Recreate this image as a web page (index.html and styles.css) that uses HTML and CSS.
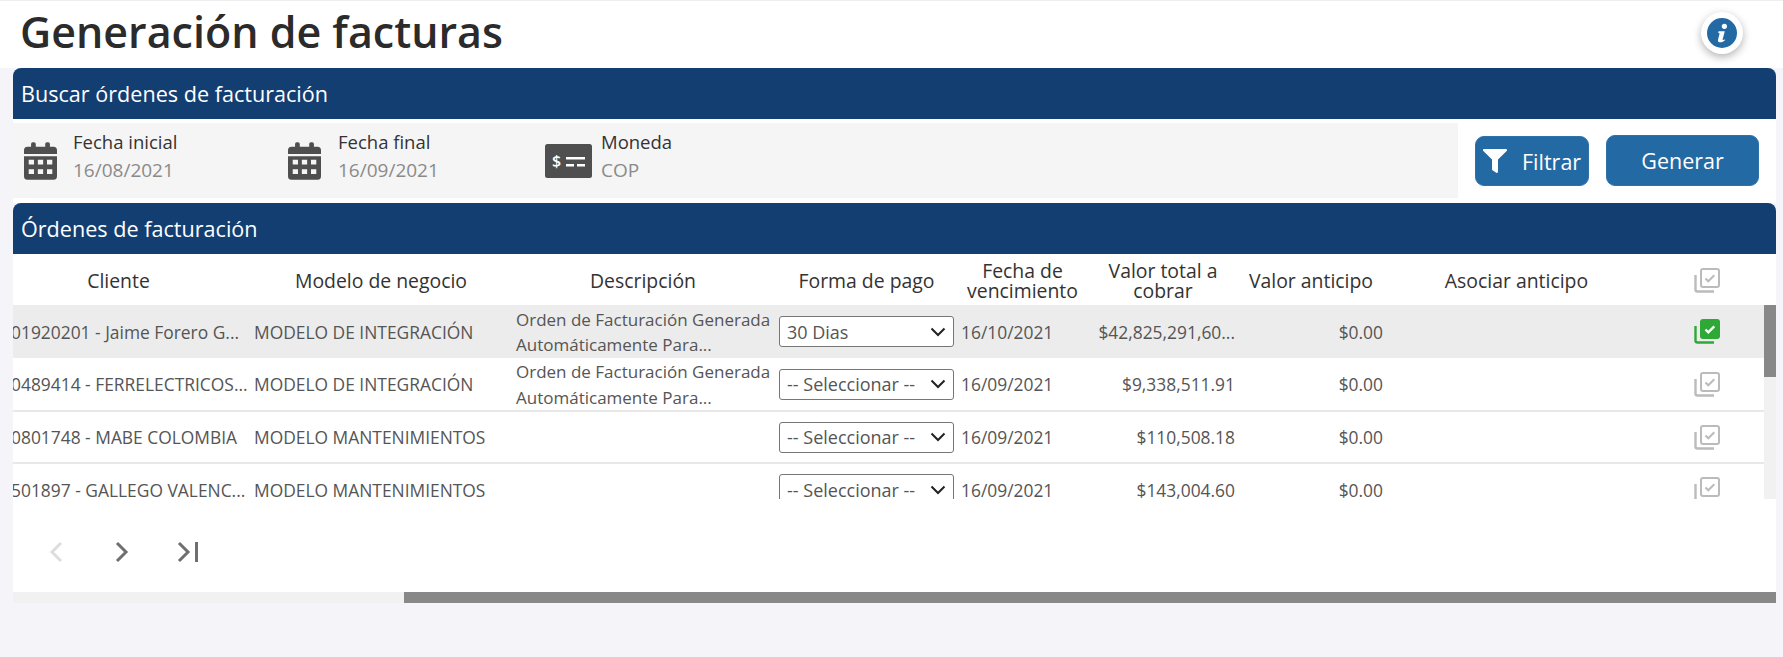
FILE: index.html
```html
<!DOCTYPE html>
<html lang="es">
<head>
  <meta charset="UTF-8" />
  <title>Generación de facturas</title>
  <link rel="stylesheet" href="styles.css">
</head>
<body>
  <svg class="sprites" width="0" height="0">
    <symbol id="i-calendar" viewBox="0 0 448 512">
      <path fill-rule="evenodd" d="M0 192h448v272a48 48 0 0 1-48 48H48a48 48 0 0 1-48-48zM64 240v64h72v-64zM188 240v64h72v-64zM312 240v64h72v-64zM64 368v64h72v-64zM188 368v64h72v-64zM312 368v64h72v-64z"/>
      <path d="M48 64h48V24a24 24 0 0 1 24-24h16a24 24 0 0 1 24 24v40h128V24a24 24 0 0 1 24-24h16a24 24 0 0 1 24 24v40h48a48 48 0 0 1 48 48v48H0v-48a48 48 0 0 1 48-48z"/>
    </symbol>
    <symbol id="i-pick" viewBox="0 0 26 25">
      <rect x="7" y="1" width="18" height="18" rx="2" fill="none" stroke="currentColor" stroke-width="2"/>
      <path d="M1.5 7v14.5a2 2 0 0 0 2 2H20" fill="none" stroke="currentColor" stroke-width="2.4"/>
      <path d="M11.5 10.5l2.8 2.8 6-6" fill="none" stroke="currentColor" stroke-width="2"/>
    </symbol>
    <symbol id="i-picked" viewBox="0 0 26 25">
      <rect x="6" y="0" width="20" height="20" rx="3" fill="currentColor"/>
      <path d="M1.5 7v14.5a2 2 0 0 0 2 2H20" fill="none" stroke="currentColor" stroke-width="2.4"/>
      <path d="M11.5 10.5l2.8 2.8 6-6" fill="none" stroke="#fff" stroke-width="2.4"/>
    </symbol>
  </svg>

  <header class="page-head">
    <h1>Generación de facturas</h1>
    <button class="info-btn" aria-label="Información">
      <svg viewBox="0 0 30 30" width="30" height="30">
        <circle cx="15" cy="15" r="15" fill="#2369a3"/>
        <circle cx="17.4" cy="8.3" r="2.6" fill="#fff"/>
        <path d="M11.6 13.2h6.2l-2.2 8.2c-.1.5.3.7.8.5l1.2-.6.3.9c-1.5 1.4-3 2.1-4.6 2.1-1.900 0-2.700-1-2.300-2.600l1.500-5.700c.1-.6-.2-.9-.8-.9h-.5z" fill="#fff"/>
      </svg>
    </button>
  </header>

  <main class="content">
    <div class="bar">Buscar órdenes de facturación</div>
    <section class="search">
      <div class="filters">
        <div class="filter filter-date">
          <svg class="cal-icon"><use href="#i-calendar"/></svg>
          <div class="filter-text"><div class="filter-label">Fecha inicial</div><div class="filter-value">16/08/2021</div></div>
        </div>
        <div class="filter filter-date2">
          <svg class="cal-icon"><use href="#i-calendar"/></svg>
          <div class="filter-text"><div class="filter-label">Fecha final</div><div class="filter-value">16/09/2021</div></div>
        </div>
        <div class="filter">
          <svg class="money-icon" viewBox="0 0 47 34">
            <rect width="47" height="34" rx="2.500" fill="#4f4f4f"/>
            <path d="M21 13h19v2.600H21zM21 20h8v2.600h-8zM32 20h8v2.600h-8z" fill="#fff"/>
            <text x="11.500" y="23" class="money-sign">$</text>
          </svg>
          <div class="filter-text"><div class="filter-label">Moneda</div><div class="filter-value">COP</div></div>
        </div>
      </div>
      <div class="actions">
        <button class="btn btn-filter">
          <svg viewBox="0 0 512 512" width="24" height="24"><path fill="#fff" d="M487.976 0H24.028C2.71 0-8.047 25.866 7.058 40.971L192 225.941V432c0 7.831 3.821 15.17 10.237 19.662l80 55.98C298.02 518.69 320 507.493 320 487.98V225.941l184.947-184.97C520.021 25.896 509.338 0 487.976 0z"/></svg>
          Filtrar
        </button>
        <button class="btn btn-generate">Generar</button>
      </div>
    </section>

    <div class="bar bar-orders">Órdenes de facturación</div>
    <section class="orders">
      <div class="cols head">
        <div class="h-client">Cliente</div>
        <div class="h-model">Modelo de negocio</div>
        <div class="h-desc">Descripción</div>
        <div>Forma de pago</div>
        <div class="h-date">Fecha de vencimiento</div>
        <div class="h-total">Valor total a cobrar</div>
        <div class="h-advance">Valor anticipo</div>
        <div>Asociar anticipo</div>
        <div class="pick"><svg class="pick-icon"><use href="#i-pick"/></svg></div>
      </div>

      <div class="table-body">
        <div class="rows">
          <div class="cols row selected">
            <div class="client">01920201 - Jaime Forero G...</div>
            <div>MODELO DE INTEGRACIÓN</div>
            <div class="desc">Orden de Facturación Generada<br>Automáticamente Para...</div>
            <div><select><option>30 Dias</option></select></div>
            <div class="date">16/10/2021</div>
            <div class="num">$42,825,291,60...</div>
            <div class="num">$0.00</div>
            <div></div>
            <div class="pick"><svg class="pick-icon on"><use href="#i-picked"/></svg></div>
          </div>
          <div class="cols row">
            <div class="client">0489414 - FERRELECTRICOS...</div>
            <div>MODELO DE INTEGRACIÓN</div>
            <div class="desc">Orden de Facturación Generada<br>Automáticamente Para...</div>
            <div><select><option>-- Seleccionar --</option></select></div>
            <div class="date">16/09/2021</div>
            <div class="num">$9,338,511.91</div>
            <div class="num">$0.00</div>
            <div></div>
            <div class="pick"><svg class="pick-icon"><use href="#i-pick"/></svg></div>
          </div>
          <div class="cols row">
            <div class="client">0801748 - MABE COLOMBIA</div>
            <div>MODELO MANTENIMIENTOS</div>
            <div class="desc"></div>
            <div><select><option>-- Seleccionar --</option></select></div>
            <div class="date">16/09/2021</div>
            <div class="num">$110,508.18</div>
            <div class="num">$0.00</div>
            <div></div>
            <div class="pick"><svg class="pick-icon"><use href="#i-pick"/></svg></div>
          </div>
          <div class="cols row">
            <div class="client">501897 - GALLEGO VALENC...</div>
            <div>MODELO MANTENIMIENTOS</div>
            <div class="desc"></div>
            <div><select><option>-- Seleccionar --</option></select></div>
            <div class="date">16/09/2021</div>
            <div class="num">$143,004.60</div>
            <div class="num">$0.00</div>
            <div></div>
            <div class="pick"><svg class="pick-icon"><use href="#i-pick"/></svg></div>
          </div>
        </div>
        <div class="vbar"><div class="vbar-thumb"></div></div>
      </div>

      <nav class="pager">
        <button class="page-btn off"><svg viewBox="0 0 14 22" width="14" height="22"><path d="M12 2 3 11l9 9"/></svg></button>
        <button class="page-btn"><svg viewBox="0 0 14 22" width="14" height="22"><path d="M2 2l9 9-9 9"/></svg></button>
        <button class="page-btn"><svg viewBox="0 0 22 22" width="22" height="22"><path d="M2 2l9 9-9 9M19.500 1v20"/></svg></button>
      </nav>
    </section>
    <div class="hbar"><div class="hbar-thumb"></div></div>
  </main>
</body>
</html>
```

FILE: styles.css
```css
* {
  box-sizing: border-box;
}

html, body {
  height: 100%;
}

body {
  margin: 0;
  background: #f4f4f9;
  color: #555;
  font-family: "Open Sans", "Noto Sans", sans-serif;
  font-size: 17.4px;
  overflow: hidden;
}

.sprites {
  display: block;
  height: 0;
}

.page-head {
  display: flex;
  align-items: center;
  justify-content: space-between;
  height: 68px;
  padding: 0 40px 5px 20px;
  background: #fff;
  border-top: 1px solid #eee;
}

h1 {
  margin: 0;
  color: #2b2b2b;
  font-size: 43px;
  font-weight: 600;
  line-height: 52px;
}

.info-btn {
  display: flex;
  align-items: center;
  justify-content: center;
  width: 42px;
  height: 42px;
  padding: 0;
  margin-top: 2px;
  border: none;
  border-radius: 50%;
  background: #fff;
  box-shadow: 0 3px 8px rgba(0,0,0,0.3);
}

.content {
  margin: 0 7px 0 13px;
}

.bar {
  height: 51px;
  padding-left: 8px;
  border-radius: 8px 8px 0 0;
  background: #133e72;
  color: #fff;
  font-size: 21.6px;
  line-height: 52px;
}

.search {
  display: flex;
  height: 84px;
  padding-top: 4px;
  background: #fff;
}

.filters {
  display: flex;
  width: 1445px;
  height: 75px;
  padding-left: 11px;
  background: #f5f5f5;
}

.filter {
  display: flex;
  align-items: center;
  gap: 17px;
}

.filter-date {
  width: 264px;
  gap: 16px;
}

.filter-date2 {
  width: 257px;
}

.filter-text {
  margin-bottom: 8px;
}

.money-icon {
  width: 47px;
  height: 34px;
  margin-right: -8px;
}

.money-sign {
  fill: #fff;
  font-size: 16px;
  font-weight: 600;
  text-anchor: middle;
}

.cal-icon {
  width: 33px;
  height: 38px;
  fill: #4f4f4f;
}

.filter-label {
  color: #333;
  font-size: 18.5px;
  line-height: 28px;
}

.filter-value {
  color: #8a8a8a;
  font-size: 19px;
  line-height: 29px;
}

.actions {
  display: flex;
  align-items: flex-start;
  gap: 17px;
  padding: 12px 0 0 17px;
}

.btn {
  height: 50px;
  border: 1px solid #2f72a9;
  border-radius: 9px;
  background: #2369a3;
  color: #fff;
  font-family: inherit;
  font-size: 21.5px;
}

.btn-filter {
  display: flex;
  align-items: center;
  gap: 15px;
  width: 114px;
  margin-top: 1px;
  padding: 0 0 0 7px;
}

.btn-generate {
  width: 153px;
  height: 51px;
}

.orders {
  background: #fff;
}

.cols {
  display: grid;
  grid-template-columns: 241px 262px 263px 175px 137px 144px 148px 267px 114px;
  align-items: center;
}

.head {
  height: 51px;
  padding-top: 2px;
  color: #333;
  font-size: 19.4px;
  font-weight: 500;
  line-height: 20px;
  text-align: center;
}

.h-client {
  padding-right: 30px;
}

.h-model {
  padding-right: 8px;
}

.h-desc {
  padding-right: 9px;
}

.h-date {
  padding: 0 7px;
}

.h-total {
  padding: 0 12px;
}

.h-advance {
  padding-left: 4px;
}

.table-body {
  display: flex;
  height: 194px;
}

.rows {
  flex: 1;
  overflow: hidden;
}

.row {
  height: 53px;
  border-bottom: 2px solid #e8e8e8;
  white-space: nowrap;
}

.row.selected {
  border-bottom: none;
  background: #ececec;
}

.row:nth-child(2) {
  height: 54px;
}

.row:nth-child(3) {
  height: 52px;
}

.client {
  margin-left: -2px;
  overflow: hidden;
}

.desc {
  padding-top: 1px;
  font-size: 17px;
  line-height: 25.5px;
}

.date {
  padding-left: 7px;
}

.num {
  text-align: right;
}

.pick {
  display: flex;
  justify-content: center;
}

.pick-icon {
  width: 26px;
  height: 25px;
  color: #bbb;
}

.pick-icon.on {
  color: #2ea836;
}

select {
  appearance: none;
  width: 175px;
  height: 31px;
  padding-left: 7px;
  border: 1px solid #767676;
  border-radius: 3px;
  background: #fff url("data:image/svg+xml,%3Csvg xmlns='http://www.w3.org/2000/svg' width='16' height='10'%3E%3Cpath d='M1.500 1.500 8 8l6.500-6.500' fill='none' stroke='%23222' stroke-width='2'/%3E%3C/svg%3E") no-repeat right 7px center;
  color: #555;
  font-family: inherit;
  font-size: 18px;
}

.vbar {
  width: 12px;
  background: #f1f1f1;
}

.vbar-thumb {
  height: 72px;
  background: #888;
}

.pager {
  display: flex;
  align-items: center;
  height: 93px;
  padding: 12px 0 0 10px;
}

.page-btn {
  display: flex;
  align-items: center;
  justify-content: center;
  width: 66px;
  height: 40px;
  padding: 0;
  border: none;
  background: none;
}

.page-btn svg {
  fill: none;
  stroke: #6f6f6f;
  stroke-width: 3;
}

.page-btn.off svg {
  stroke: #ddd;
}

.hbar {
  display: flex;
  justify-content: flex-end;
  height: 11px;
  background: #f1f1f1;
}

.hbar-thumb {
  width: 1372px;
  background: #888;
}
```
